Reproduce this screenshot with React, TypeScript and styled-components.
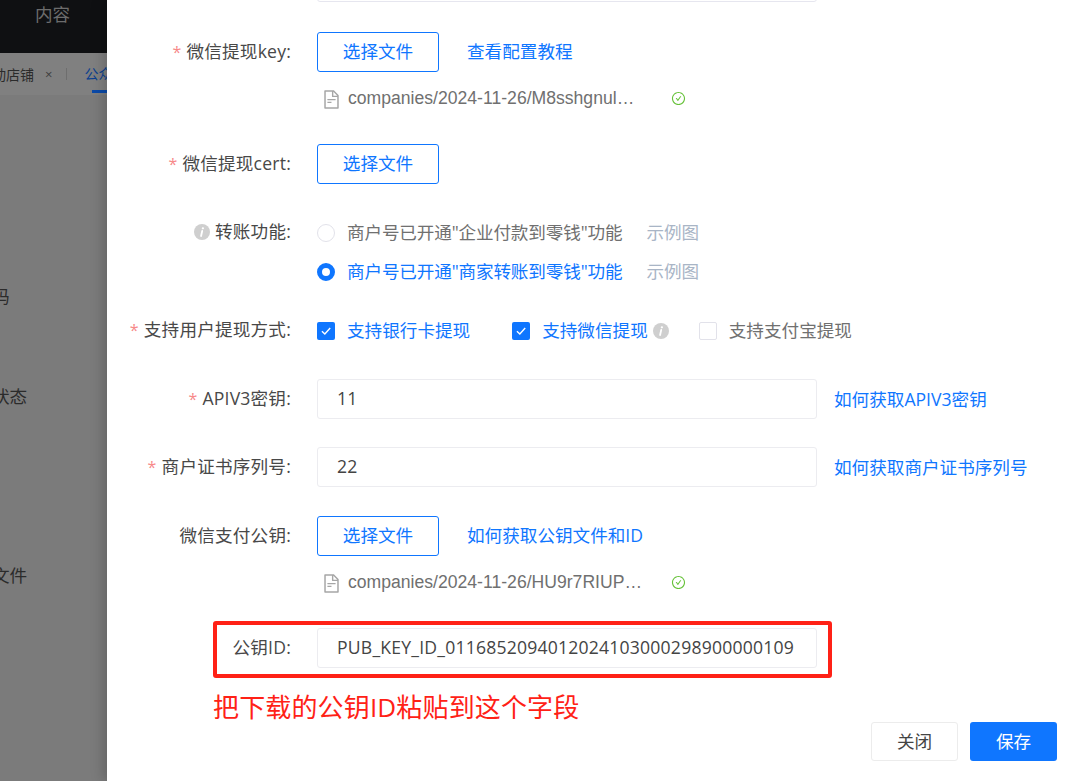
import styled, { createGlobalStyle } from "styled-components";
import { AiOutlineFileText, AiOutlineCheckCircle } from "react-icons/ai";

const GlobalStyle = createGlobalStyle`
  html, body {
    margin: 0;
    height: 100%;
    overflow: hidden;
    background: #fff;
  }
  * {
    box-sizing: border-box;
  }
`;

const InfoIcon = () => (
  <InfoSvg viewBox="0 0 16 16">
    <circle cx="8" cy="8" r="8" fill="#cfcfcf" />
    <circle cx="8.9" cy="4.3" r="1.15" fill="#fff" />
    <path d="M8.2 7 L7.1 12" stroke="#fff" strokeWidth="1.8" strokeLinecap="round" />
  </InfoSvg>
);

const FileLine = ({ name }: { name: string }) => (
  <FileRow>
    <FileIcon />
    <FileName>{name}</FileName>
    <DoneIcon />
  </FileRow>
);

const App = () => {
  return (
    <Page>
      <GlobalStyle />
      <Backdrop>
        <TopBar>
          <TopMenu>内容</TopMenu>
        </TopBar>
        <TabBar>
          <TabText>活动店铺</TabText>
          <TabClose>×</TabClose>
          <TabDivider />
          <ActiveTab>公众号</ActiveTab>
        </TabBar>
        <BehindLabel $top={190} $left={-8}>码</BehindLabel>
        <BehindLabel $top={78} $left={-8}>状态</BehindLabel>
        <BehindLabel $top={157} $left={-8}>文件</BehindLabel>
      </Backdrop>
      <Drawer>
        <Form>
          <TopInput />
          <Field $top={30}>
            <Label $required>微信提现key:</Label>
            <Control>
              <UploadButton>选择文件</UploadButton>
              <ButtonLink>查看配置教程</ButtonLink>
            </Control>
          </Field>
          <FileLine name="companies/2024-11-26/M8sshgnul…" />
          <Field $top={33}>
            <Label $required>微信提现cert:</Label>
            <Control>
              <UploadButton>选择文件</UploadButton>
            </Control>
          </Field>
          <RadioField>
            <Label>
              <LabelInfo>
                <InfoIcon />
              </LabelInfo>
              转账功能:
            </Label>
            <RadioList>
              <OptionRow>
                <Radio />
                <RadioText>商户号已开通"企业付款到零钱"功能</RadioText>
                <SampleLink>示例图</SampleLink>
              </OptionRow>
              <OptionRow>
                <Radio $checked />
                <RadioText $checked>商户号已开通"商家转账到零钱"功能</RadioText>
                <SampleLink>示例图</SampleLink>
              </OptionRow>
            </RadioList>
          </RadioField>
          <Field $top={20}>
            <Label $required>支持用户提现方式:</Label>
            <Control>
              <CheckItem $gap={42}>
                <Checkbox $checked>
                  <CheckMark viewBox="0 0 12 12">
                    <path d="M2.5 6.2 L5 8.6 L9.6 3.4" fill="none" stroke="#fff" strokeWidth="1.2" />
                  </CheckMark>
                </Checkbox>
                <OptionText $checked>支持银行卡提现</OptionText>
              </CheckItem>
              <CheckItem $gap={30}>
                <Checkbox $checked>
                  <CheckMark viewBox="0 0 12 12">
                    <path d="M2.5 6.2 L5 8.6 L9.6 3.4" fill="none" stroke="#fff" strokeWidth="1.2" />
                  </CheckMark>
                </Checkbox>
                <OptionText $checked>支持微信提现</OptionText>
                <InlineInfo>
                  <InfoIcon />
                </InlineInfo>
              </CheckItem>
              <CheckItem $gap={0}>
                <Checkbox />
                <OptionText>支持支付宝提现</OptionText>
              </CheckItem>
            </Control>
          </Field>
          <Field $top={29}>
            <Label $required>APIV3密钥:</Label>
            <Control>
              <TextInput>11</TextInput>
              <InputLink>如何获取APIV3密钥</InputLink>
            </Control>
          </Field>
          <Field $top={28}>
            <Label $required>商户证书序列号:</Label>
            <Control>
              <TextInput>22</TextInput>
              <InputLink>如何获取商户证书序列号</InputLink>
            </Control>
          </Field>
          <Field $top={29}>
            <Label>微信支付公钥:</Label>
            <Control>
              <UploadButton>选择文件</UploadButton>
              <ButtonLink>如何获取公钥文件和ID</ButtonLink>
            </Control>
          </Field>
          <FileLine name="companies/2024-11-26/HU9r7RIUP…" />
          <Field $top={33}>
            <Label>公钥ID:</Label>
            <Control>
              <TextInput>PUB_KEY_ID_0116852094012024103000298900000109</TextInput>
            </Control>
          </Field>
        </Form>
        <RedBox />
        <RedNote>把下载的公钥ID粘贴到这个字段</RedNote>
        <Footer>
          <CloseButton>关闭</CloseButton>
          <SaveButton>保存</SaveButton>
        </Footer>
      </Drawer>
    </Page>
  );
};

const Page = styled.div`
  display: flex;
  width: 1074px;
  height: 781px;
  overflow: hidden;
  font-family: "Open Sans", "Noto Sans CJK SC", sans-serif;
  font-size: 17.6px;
  color: #444;
`;
const Backdrop = styled.div`
  width: 107px;
  flex-shrink: 0;
  background: #7b7b7b;
  overflow: hidden;
`;
const TopBar = styled.div`
  height: 53px;
  background: #0f1012;
  padding: 1px 0 0 35px;
`;
const TopMenu = styled.div`
  font-size: 17.6px;
  color: #6c6c6c;
  white-space: nowrap;
`;
const TabBar = styled.div`
  display: flex;
  align-items: center;
  height: 42px;
  margin-left: -22px;
  background: #808080;
  white-space: nowrap;
  font-size: 14px;
  color: #2b2b2b;
`;
const TabText = styled.div`
  width: 56px;
  flex-shrink: 0;
`;
const TabClose = styled.div`
  margin-left: 11px;
  font-size: 13px;
  color: #3d3d3d;
`;
const TabDivider = styled.div`
  width: 1px;
  height: 12px;
  margin-left: 14px;
  background: #6e6e6e;
  flex-shrink: 0;
`;
const ActiveTab = styled.div`
  display: flex;
  align-items: center;
  height: 42px;
  margin-left: 17px;
  padding-bottom: 2px;
  color: #0b3f8f;
  flex-shrink: 0;
  background: linear-gradient(#0b4aa8, #0b4aa8) 8px 37px / 40px 3px no-repeat;
`;
const BehindLabel = styled.div<{ $top: number; $left: number }>`
  margin-top: ${({ $top }) => $top}px;
  margin-left: ${({ $left }) => $left}px;
  line-height: 22px;
  color: #2b2b2b;
  white-space: nowrap;
`;
const Drawer = styled.div`
  position: relative;
  flex: 1;
  display: flex;
  flex-direction: column;
  background: #fff;
  box-shadow: -4px 0 12px rgba(0, 0, 0, 0.18);
`;
const Form = styled.div`
  display: flex;
  flex-direction: column;
  margin-top: -38px;
`;
const TopInput = styled.div`
  width: 500px;
  height: 40px;
  margin-left: 210px;
  border: 1px solid #e6e6ef;
  border-radius: 3px;
`;
const Field = styled.div<{ $top: number }>`
  display: flex;
  align-items: center;
  margin-top: ${({ $top }) => $top}px;
  min-height: 39px;
`;
const RadioField = styled.div`
  display: flex;
  align-items: flex-start;
  margin-top: 29px;
`;
const Label = styled.div<{ $required?: boolean }>`
  width: 184px;
  flex-shrink: 0;
  margin-right: 26px;
  padding-bottom: 1px;
  line-height: 37px;
  text-align: right;
  white-space: nowrap;
  letter-spacing: 0.2px;
  color: #484848;
  ${({ $required }) =>
    $required
      ? `&::before {
    content: "*";
    margin-right: 5px;
    font-size: 16px;
    color: #f78989;
  }`
      : ``}
`;
const LabelInfo = styled.span`
  display: inline-flex;
  margin-right: 5px;
  vertical-align: -2px;
`;
const InlineInfo = styled.span`
  display: inline-flex;
  margin-left: 5px;
`;
const InfoSvg = styled.svg`
  width: 16px;
  height: 16px;
  display: block;
`;
const Control = styled.div`
  display: flex;
  align-items: center;
`;
const UploadButton = styled.button`
  width: 122px;
  height: 40px;
  padding: 0 0 3px;
  border: 1px solid #0f76ff;
  border-radius: 3px;
  background: #fff;
  font: inherit;
  color: #0f76ff;
`;
const ButtonLink = styled.a`
  margin: 0 0 3px 28px;
  color: #0f76ff;
`;
const InputLink = styled.a`
  margin: 0 0 2px 17px;
  color: #0f76ff;
`;
const FileRow = styled.div`
  display: flex;
  align-items: center;
  height: 24px;
  margin: 15px 0 0 214px;
`;
const FileIcon = styled(AiOutlineFileText)`
  width: 21px;
  height: 21px;
  color: #a6a6a6;
  flex-shrink: 0;
`;
const FileName = styled.span`
  width: 323px;
  margin: 0 0 1px 6px;
  font-family: "Liberation Sans", "Noto Sans CJK SC", sans-serif;
  color: #707070;
  white-space: nowrap;
`;
const DoneIcon = styled(AiOutlineCheckCircle)`
  width: 15px;
  height: 15px;
  margin-top: -2px;
  color: #67c23a;
`;
const RadioList = styled.div`
  display: flex;
  flex-direction: column;
`;
const OptionRow = styled.div`
  display: flex;
  align-items: center;
  height: 39px;
`;
const Radio = styled.span<{ $checked?: boolean }>`
  width: 18px;
  height: 18px;
  border-radius: 50%;
  flex-shrink: 0;
  ${({ $checked }) =>
    $checked
      ? `border: 5.5px solid #0f76ff; background: #fff;`
      : `border: 1px solid #e2e2ea; background: #fff;`}
`;
const OptionText = styled.span<{ $checked?: boolean }>`
  margin: 0 0 2px 12px;
  white-space: nowrap;
  color: ${({ $checked }) => ($checked ? "#0f76ff" : "#707070")};
`;
const RadioText = styled(OptionText)`
  letter-spacing: -0.15px;
`;
const SampleLink = styled.a`
  margin: 0 0 2px 24px;
  color: #a9b5c6;
`;
const CheckItem = styled.label<{ $gap: number }>`
  display: flex;
  align-items: center;
  margin-right: ${({ $gap }) => $gap}px;
`;
const Checkbox = styled.span<{ $checked?: boolean }>`
  display: flex;
  align-items: center;
  justify-content: center;
  width: 18px;
  height: 18px;
  border-radius: 2px;
  flex-shrink: 0;
  ${({ $checked }) =>
    $checked ? `background: #0f76ff;` : `border: 1px solid #e2e2ea; background: #fff;`}
`;
const CheckMark = styled.svg`
  width: 14px;
  height: 14px;
`;
const TextInput = styled.div`
  width: 500px;
  height: 40px;
  padding: 0 19px;
  border: 1px solid #ececf0;
  border-radius: 3px;
  line-height: 37px;
  letter-spacing: 0.2px;
  color: #444;
  white-space: nowrap;
`;
const RedBox = styled.div`
  position: absolute;
  left: 106px;
  top: 621px;
  width: 619px;
  height: 57px;
  border: 4px solid #ff2116;
  border-radius: 3px;
`;
const RedNote = styled.div`
  position: absolute;
  left: 106px;
  top: 689px;
  font-size: 26px;
  line-height: 36px;
  letter-spacing: 0.15px;
  color: #ff2116;
  white-space: nowrap;
`;
const Footer = styled.div`
  display: flex;
  justify-content: flex-end;
  gap: 12px;
  margin-top: auto;
  padding: 0 17px 20px 0;
`;
const CloseButton = styled.button`
  width: 87px;
  height: 39px;
  padding: 0 0 2px;
  border: 1px solid #ececec;
  border-radius: 3px;
  background: #fff;
  font: inherit;
  color: #444;
`;
const SaveButton = styled.button`
  width: 87px;
  height: 39px;
  padding: 0 0 2px;
  border: none;
  border-radius: 3px;
  background: #0f76ff;
  font: inherit;
  color: #fff;
`;

export default App;
